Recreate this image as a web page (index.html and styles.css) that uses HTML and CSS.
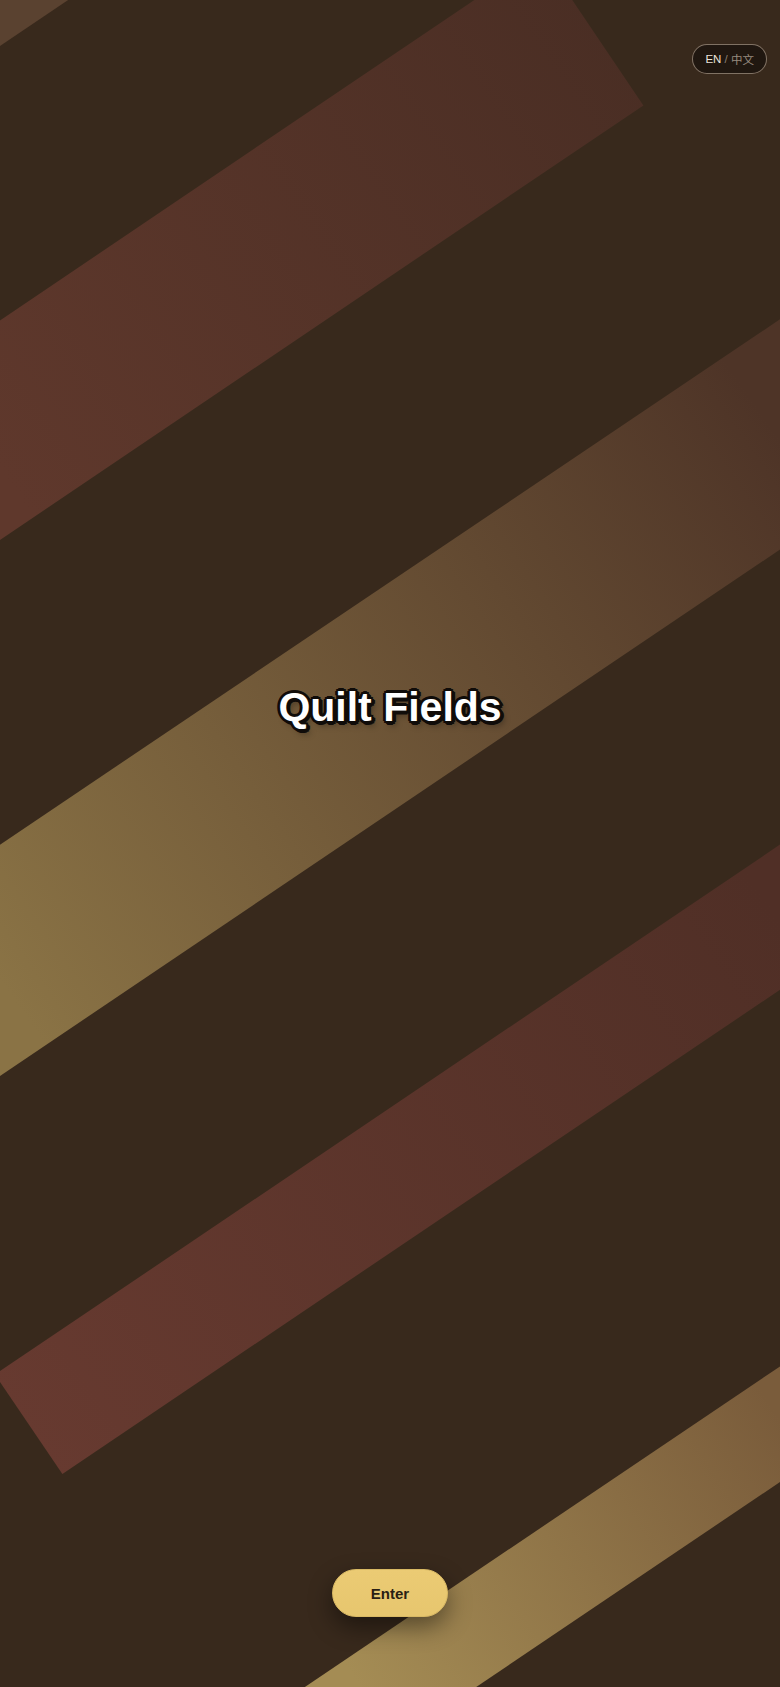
FILE: index.html
```html
<!DOCTYPE html>
<html lang="en">
<head>
<meta charset="utf-8">
<meta name="viewport" content="width=device-width, initial-scale=1">
<title>Quilt Fields</title>
<link rel="stylesheet" href="styles.css">
</head>
<body>
<div class="page">
  <svg class="backdrop" viewBox="0 0 780 1687" preserveAspectRatio="none" aria-hidden="true">
    <defs>
      <linearGradient id="g1" gradientUnits="userSpaceOnUse" x1="0" y1="470" x2="620" y2="40">
        <stop offset="0" stop-color="#5f382c"/>
        <stop offset="1" stop-color="#4a2e24"/>
      </linearGradient>
      <linearGradient id="g2" gradientUnits="userSpaceOnUse" x1="0" y1="980" x2="780" y2="440">
        <stop offset="0" stop-color="#8a7345"/>
        <stop offset="1" stop-color="#4e3427"/>
      </linearGradient>
      <linearGradient id="g3" gradientUnits="userSpaceOnUse" x1="30" y1="1440" x2="780" y2="920">
        <stop offset="0" stop-color="#673a30"/>
        <stop offset="1" stop-color="#502f26"/>
      </linearGradient>
      <linearGradient id="g4" gradientUnits="userSpaceOnUse" x1="360" y1="1687" x2="780" y2="1420">
        <stop offset="0" stop-color="#a48c54"/>
        <stop offset="1" stop-color="#7a5c3b"/>
      </linearGradient>
    </defs>
    <polygon fill="#5a4230" points="-100,113.5 400,-224 400,-400 -100,-400"/>
    <polygon fill="url(#g1)" points="-100,388 541.6,-45.4 643.4,105.4 -100,607.5"/>
    <polygon fill="url(#g2)" points="-100,912 900,238.5 900,468.5 -100,1143.5"/>
    <polygon fill="url(#g3)" points="-5,1374.5 900,763.6 900,908.8 62.4,1474"/>
    <polygon fill="url(#g4)" points="200,1757.8 900,1285.4 900,1401 200,1873.4"/>
  </svg>

  <header class="top">
    <button class="lang" type="button"><span class="lang-on">EN</span><span class="lang-sep"> / </span><span class="lang-off">中文</span></button>
  </header>

  <main class="hero">
    <h1 class="title">Quilt Fields</h1>
  </main>

  <footer class="bottom">
    <button class="enter" type="button">Enter</button>
  </footer>
</div>
</body>
</html>
```

FILE: styles.css
```css
html, body {
  margin: 0;
  padding: 0;
}

body {
  background: #38291c;
  font-family: "Liberation Sans", Arial, sans-serif;
  overflow: hidden;
}

.page {
  position: relative;
  width: 100%;
  height: 100vh;
  display: flex;
  flex-direction: column;
  overflow: hidden;
  background: #38291c;
}

.backdrop {
  position: absolute;
  inset: 0;
  width: 100%;
  height: 100%;
  z-index: 0;
}

.top,
.hero,
.bottom {
  position: relative;
  z-index: 1;
}

.top {
  display: flex;
  justify-content: flex-end;
  padding: 44px 13px 0 0;
}

.lang {
  display: flex;
  align-items: center;
  height: 30px;
  box-sizing: border-box;
  padding: 1px 12px 0;
  border: 1px solid rgba(210, 190, 170, 0.55);
  border-radius: 15px;
  background: rgba(20, 14, 10, 0.65);
  font-family: "Liberation Sans", "Noto Sans CJK SC", sans-serif;
  font-size: 11.5px;
  line-height: 1;
  white-space: pre;
  cursor: pointer;
}

.lang-on {
  color: #ece4dc;
}

.lang-sep {
  color: #8c8176;
}

.lang-off {
  color: #978b7f;
  font-family: "Noto Sans CJK SC", sans-serif;
}

.hero {
  flex: 1;
  display: flex;
  align-items: center;
  justify-content: center;
  padding-bottom: 230px;
}

.title {
  margin: 0;
  font-size: 41px;
  font-weight: 700;
  line-height: 48px;
  color: #ffffff;
  text-shadow:
    0 -3px 0 #100c09,
    0 3px 0 #100c09,
    -3px 0 0 #100c09,
    3px 0 0 #100c09,
    -2px -2px 0 #100c09,
    2px -2px 0 #100c09,
    -2px 2px 0 #100c09,
    2px 2px 0 #100c09,
    3px 3px 0 #100c09,
    1px 4px 0 #100c09,
    4px 1px 0 #100c09,
    4px 5px 6px rgba(0, 0, 0, 0.35);
}

.bottom {
  display: flex;
  justify-content: center;
  padding-bottom: 70px;
}

.enter {
  height: 48px;
  padding: 0 38px;
  border: 1px solid #d9b964;
  border-radius: 24px;
  background: linear-gradient(180deg, #ebcb74 0%, #e7c66e 100%);
  color: #2a1f14;
  font-family: "Liberation Sans", Arial, sans-serif;
  font-size: 15px;
  font-weight: 700;
  box-shadow: 0 10px 24px rgba(0, 0, 0, 0.45);
  cursor: pointer;
}
```
